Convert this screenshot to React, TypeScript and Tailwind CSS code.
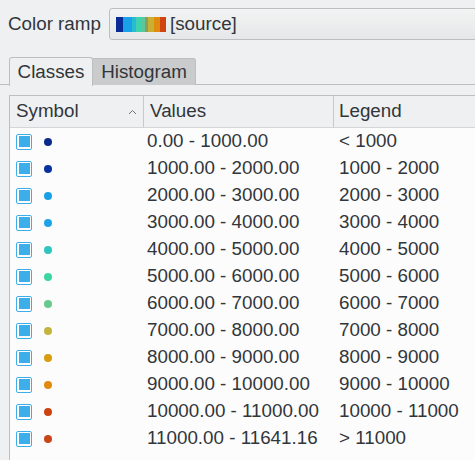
import React from "react";

const rows = [
  ["0.00 - 1000.00", "< 1000", "#0b2a8c"],
  ["1000.00 - 2000.00", "1000 - 2000", "#08309e"],
  ["2000.00 - 3000.00", "2000 - 3000", "#17a0e6"],
  ["3000.00 - 4000.00", "3000 - 4000", "#1ea2ea"],
  ["4000.00 - 5000.00", "4000 - 5000", "#2ec6be"],
  ["5000.00 - 6000.00", "5000 - 6000", "#3ad6a4"],
  ["6000.00 - 7000.00", "6000 - 7000", "#68c98c"],
  ["7000.00 - 8000.00", "7000 - 8000", "#c2b43c"],
  ["8000.00 - 9000.00", "8000 - 9000", "#d89c10"],
  ["9000.00 - 10000.00", "9000 - 10000", "#e08a0e"],
  ["10000.00 - 11000.00", "10000 - 11000", "#cc4210"],
  ["11000.00 - 11641.16", "> 11000", "#c84618"],
];

const ramp = [
  ["#0a2a96", 7],
  ["#18a0e8", 9],
  ["#28bcd0", 4],
  ["#3ed2b0", 5],
  ["#5cc896", 4],
  ["#8c9a64", 3],
  ["#c8b030", 6],
  ["#e08a10", 6],
  ["#d04410", 6],
];

export default function App() {
  return (
    <div
      className="w-[475px] h-[460px] overflow-hidden bg-[#eff0f1] text-[#31363b] text-[18.8px] leading-none relative"
      style={{ fontFamily: '"Liberation Sans", Arial, sans-serif' }}
    >
      <div className="flex items-center h-[32px] mt-[8px] pl-[8px]">
        <span className="w-[101px]">Color ramp</span>
        <div className="flex-1 h-[32px] mr-[-10px] rounded-[3px] border border-[#bcbebf] bg-gradient-to-b from-[#f2f3f3] to-[#e6e7e8] flex items-center pl-[6px]">
          <div className="flex h-[15px]">
            {ramp.map(([c, w], i) => (
              <div key={i} style={{ background: c as string, width: w as number }} />
            ))}
          </div>
          <span className="ml-[4px]">[source]</span>
        </div>
      </div>

      <div className="mt-[17px] flex h-[28px] pl-[9px] border-b border-[#bcbebf]">
        <div className="w-[84px] h-[29px] border border-b-0 border-[#bcbebf] rounded-t-[3px] bg-[#eff0f1] flex items-center justify-center relative z-10">
          Classes
        </div>
        <div className="w-[103px] h-[27px] mt-[1px] bg-[#c9cbcc] border-t border-r border-[#bcbebf] rounded-tr-[3px] flex items-center justify-center">
          Histogram
        </div>
      </div>

      <div className="mt-[10px] ml-[9px] mr-[-10px] border-l border-t border-[#bcbebf] bg-[#fcfcfc] h-[400px]">
        <div className="flex h-[32px] bg-[#eff0f1] border-b border-[#d5d6d7]">
          <div className="w-[134px] flex items-center pl-[6px] pr-[8px] border-r border-[#c8c9ca] relative">
            Symbol
            <svg className="absolute right-[6px] top-[13px]" width="9" height="6" viewBox="0 0 9 6">
              <path d="M1 5 L4.5 1.5 L8 5" stroke="#6e7175" strokeWidth="1" fill="none" />
            </svg>
          </div>
          <div className="w-[190px] flex items-center pl-[6px] border-r border-[#c8c9ca]">Values</div>
          <div className="flex-1 flex items-center pl-[5px]">Legend</div>
        </div>
        <div>
          {rows.map(([v, l, c], i) => (
            <div key={i} className="flex items-center h-[27px]">
              <div className="w-[134px] flex items-center pl-[6px]">
                <div className="w-[16px] h-[16px] border border-[#3daee9] rounded-[2px] bg-white flex items-center justify-center">
                  <div className="w-[11px] h-[11px] bg-[#3daee9]" />
                </div>
                <div className="w-[8px] h-[8px] rounded-full ml-[12px]" style={{ background: c }} />
              </div>
              <div className="w-[191px] pl-[3px]">{v}</div>
              <div className="flex-1 pl-[4px]">{l}</div>
            </div>
          ))}
        </div>
      </div>
    </div>
  );
}
